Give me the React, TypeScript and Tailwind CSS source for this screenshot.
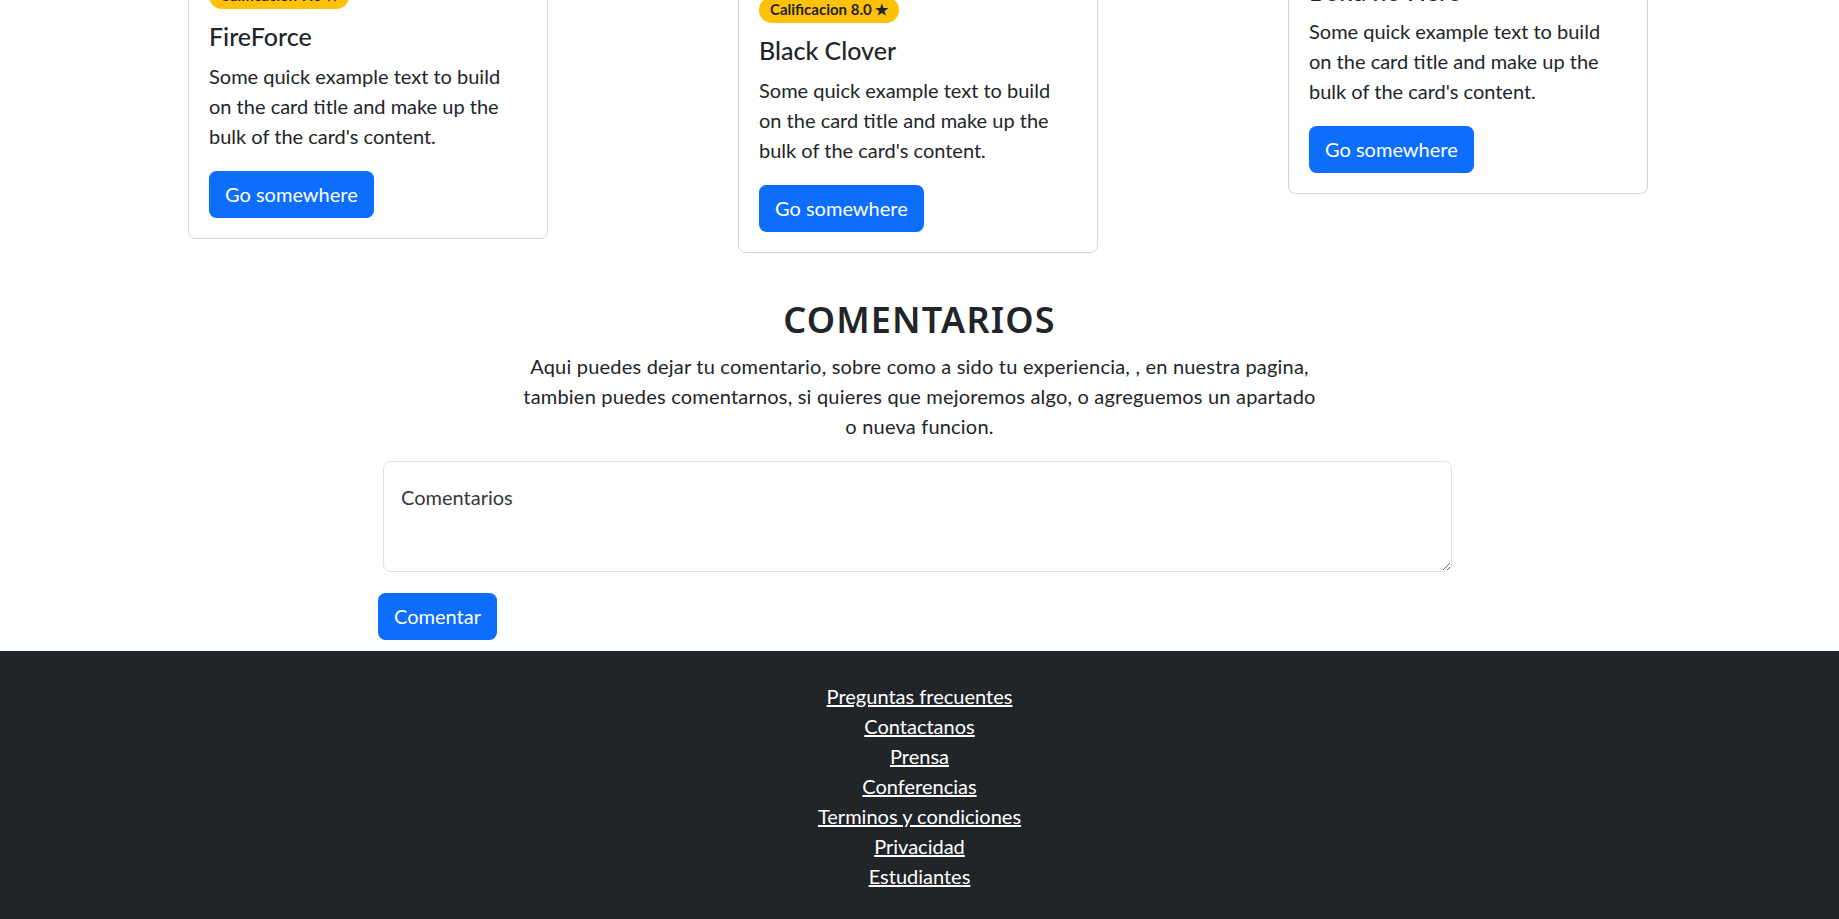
import React from "react";

type cardTypes = {
  title: string;
  rating: string;
  offset: string;
};

const cards: cardTypes[] = [
  { title: "FireForce", rating: "9.0", offset: "mt-[-38px]" },
  { title: "Black Clover", rating: "8.0", offset: "mt-[-24px]" },
  { title: "Boku no Hero", rating: "9.5", offset: "mt-[-83px]" },
];

const links = [
  "Preguntas frecuentes",
  "Contactanos",
  "Prensa",
  "Conferencias",
  "Terminos y condiciones",
  "Privacidad",
  "Estudiantes",
];

function AnimeCard({ title, rating, offset }: cardTypes) {
  return (
    <div
      className={`${offset} w-[360px] shrink-0 rounded-[7.5px] border border-[#d3d4d5] bg-white`}
    >
      <div className="p-[20px]">
        <div className="mb-[12px] flex">
          <span className="inline-block rounded-full bg-[#ffc107] px-[11px] py-[5px] text-[15px] font-bold leading-[15.5px] text-[#212529]">
            Calificacion {rating} ★
          </span>
        </div>
        <h5 className="mb-[10px] text-[25px] font-medium leading-[30px]">
          {title}
        </h5>
        <p className="mb-[20px] text-[20px] leading-[30px]">
          Some quick example text to build
          <br />
          on the card title and make up the
          <br />
          bulk of the card's content.
        </p>
        <a
          href="#"
          className="inline-block rounded-[7.5px] bg-[#0d6efd] px-[16px] py-[8.5px] text-[20px] leading-[30px] text-white"
        >
          Go somewhere
        </a>
      </div>
    </div>
  );
}

export default function App() {
  return (
    <div
      className="min-h-[919px] overflow-hidden bg-white text-[#212529]"
      style={{ fontFamily: "Lato, 'Noto Sans', sans-serif" }}
    >
      {/* tarjetas */}
      <div className="flex items-start gap-[190px] pl-[188px]">
        {cards.map((c) => (
          <AnimeCard key={c.title} {...c} />
        ))}
      </div>

      {/* comentarios */}
      <div className="mt-[46px] text-center">
        <h3 className="mb-[10px] font-['Noto_Sans',sans-serif] text-[36px] font-semibold leading-[42px] tracking-[1.2px]">
          COMENTARIOS
        </h3>
        <p className="mb-[20px] text-[20px] leading-[30px] tracking-[0.2px]">
          Aqui puedes dejar tu comentario, sobre como a sido tu experiencia, ,
          en nuestra pagina,
          <br />
          tambien puedes comentarnos, si quieres que mejoremos algo, o
          agreguemos un apartado
          <br />o nueva funcion.
        </p>
      </div>

      <div className="flex flex-col items-start pl-[378px]">
        <textarea
          className="ml-[5px] h-[111px] w-[1069px] rounded-[7.5px] border border-[#dee2e6] px-[17px] pt-[20px] text-[20px] leading-[30px] outline-none placeholder:text-[#34383c]"
          placeholder="Comentarios"
        />
        <button className="mt-[21px] rounded-[7.5px] bg-[#0d6efd] px-[16px] py-[8.5px] text-[20px] leading-[30px] text-white">
          Comentar
        </button>
      </div>

      {/* footer */}
      <footer className="mt-[11px] bg-[#212529] pb-[40px] pt-[30px]">
        <div className="flex flex-col items-center">
          {links.map((l) => (
            <a
              key={l}
              href="#"
              className="text-[20px] leading-[30px] text-white underline"
            >
              {l}
            </a>
          ))}
        </div>
      </footer>
    </div>
  );
}
